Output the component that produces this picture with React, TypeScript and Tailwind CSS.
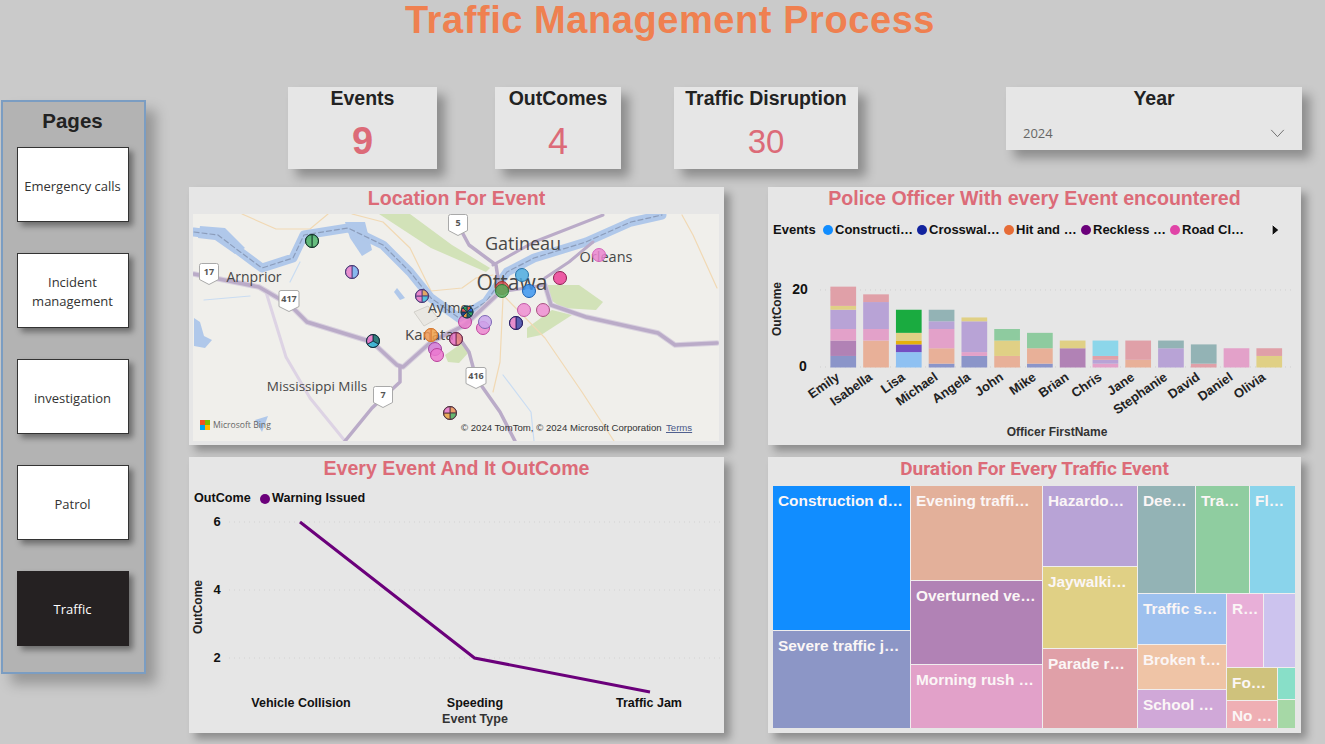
const pages = ["Emergency calls", "Incident management", "investigation", "Patrol"];

type PinData = { x: number; y: number; r?: number; colors: string[]; stroke: string };

// map pins, in page coordinates
const pins: PinData[] = [
  { x: 312, y: 241, colors: ["#4fb56c", "#45ad63"], stroke: "#14352a" },
  { x: 352, y: 272, colors: ["#76aef0", "#e67fcb"], stroke: "#4a3a78" },
  { x: 422, y: 296, colors: ["#eba24f", "#3bbad8", "#e673c6", "#e673c6"], stroke: "#4a3a78" },
  { x: 465, y: 322, colors: ["#ea7fcd"], stroke: "#b8409a" },
  { x: 467, y: 312, r: 6, colors: ["#e0433a", "#1f5fd0", "#1d9a4d", "#0d5f56", "#f0a030", "#0f2a7a", "#e0433a", "#1d9a4d"], stroke: "#1d3a4a" },
  { x: 483, y: 328, colors: ["#ec86d0"], stroke: "#c0459f" },
  { x: 485, y: 322, colors: ["#c9a6ec"], stroke: "#7d67b5" },
  { x: 516, y: 323, colors: ["#3f46a8", "#e47cc8"], stroke: "#2a1f66" },
  { x: 524, y: 310, colors: ["#ee8ed2"], stroke: "#c25aa8" },
  { x: 543, y: 310, colors: ["#ee8ed2"], stroke: "#a8507f" },
  { x: 502, y: 288, colors: ["#d85050"], stroke: "#a03030" },
  { x: 502, y: 291, colors: ["#57ad5d"], stroke: "#2e7a3c" },
  { x: 522, y: 275, colors: ["#4dace0"], stroke: "#2573a8" },
  { x: 529, y: 291, colors: ["#3d96f0"], stroke: "#1a5fb0" },
  { x: 560, y: 278, colors: ["#ec3f98"], stroke: "#8c1f50" },
  { x: 599, y: 255, colors: ["#ea86d0"], stroke: "#d565ba" },
  { x: 431, y: 335, colors: ["#f0a14c", "#ee9a58"], stroke: "#d87a30" },
  { x: 456, y: 339, colors: ["#e57a78", "#e56fc0"], stroke: "#6b2a50" },
  { x: 373, y: 341, colors: ["#0f6a68", "#2cb4d4", "#e673c6"], stroke: "#12303f" },
  { x: 435, y: 349, colors: ["#d278d6"], stroke: "#a040a0" },
  { x: 437, y: 355, colors: ["#ec78cf"], stroke: "#b83f9a" },
  { x: 450, y: 413, colors: ["#ec8f55", "#4cad5a", "#e8a040", "#e673c6"], stroke: "#503040" },
];

function Pin({ pin }: { pin: PinData }) {
  const r = pin.r ?? 6.5;
  if (pin.colors.length === 1) {
    return <circle cx={pin.x} cy={pin.y} r={r} fill={pin.colors[0]} fillOpacity={0.85} stroke={pin.stroke} strokeWidth={1} />;
  }
  const step = (Math.PI * 2) / pin.colors.length;
  return (
    <g>
      {pin.colors.map((c, i) => {
        const a = i * step - Math.PI / 2;
        const b = a + step;
        const x1 = pin.x + r * Math.cos(a);
        const y1 = pin.y + r * Math.sin(a);
        const x2 = pin.x + r * Math.cos(b);
        const y2 = pin.y + r * Math.sin(b);
        return (
          <path
            key={i}
            d={`M${pin.x} ${pin.y}L${x1} ${y1}A${r} ${r} 0 0 1 ${x2} ${y2}Z`}
            fill={c}
            fillOpacity={0.85}
            stroke={pin.stroke}
            strokeWidth={0.8}
          />
        );
      })}
      <circle cx={pin.x} cy={pin.y} r={r} fill="none" stroke={pin.stroke} strokeWidth={1} />
    </g>
  );
}

function Shield({ x, y, label, w }: { x: number; y: number; label: string; w: number }) {
  const h = w > 18 ? 21 : 20;
  const l = x - w / 2;
  const t = y - h / 2;
  return (
    <g>
      <path
        d={`M${l} ${t + 2}Q${l} ${t} ${l + 2} ${t}H${l + w - 2}Q${l + w} ${t} ${l + w} ${t + 2}V${t + h - 5}L${x} ${t + h}L${l} ${t + h - 5}Z`}
        fill="#fff"
        stroke="#a9a9a9"
        strokeWidth={1}
      />
      <text x={x} y={y - 1} textAnchor="middle" dominantBaseline="middle" fontSize={9} fontWeight={700} fill="#555" fontFamily="'Open Sans', sans-serif">
        {label}
      </text>
    </g>
  );
}

function MapLabel({ x, y, size, children, anchor = "middle" }: { x: number; y: number; size: number; children: string; anchor?: "middle" | "start" }) {
  return (
    <text x={x} y={y} textAnchor={anchor} dominantBaseline="middle" fontSize={size} fill="#474747" fontFamily="'Open Sans', sans-serif">
      {children}
    </text>
  );
}

function EventMap() {
  const river = "M194 232L218 235L235 248L262 268L293 258L304 235L348 228L383 245L410 272L431 298L459 318L486 302L507 272L534 258L586 242L631 222L662 215";
  const road417 = "M194 274L259 287L290 305L307 322L372 342L397 365L403 367L431 342L465 325L500 292";
  const road417e = "M545 285L551 305L586 317L658 333L675 345L717 343";
  const road416 = "M455 332L469 352L476 378L500 412L515 441";
  const road7 = "M400 367L400 382L372 408L345 441";
  const road5 = "M462 232L469 245L496 265L500 292";
  const roadN = "M493 265L534 242L603 215";
  const roadN2 = "M545 278L569 262L593 242";
  return (
    <svg viewBox="193 214 526 227" className="block w-[526px] h-[227px]">
      <rect x={193} y={214} width={526} height={227} fill="#f0efeb" />
      <g fill="#d2e2b8">
        <path d="M379 214L410 214L452 245L490 268L486 272L431 248Z" />
        <path d="M548 285L579 285L603 302L596 310L562 308L548 298Z" />
        <path d="M527 328L552 310L572 315L541 335L527 338Z" />
        <path d="M445 355L462 343L469 352L459 363L448 362Z" />
      </g>
      <g fill="#b0c8ea">
        <path d="M194 318L200 322L204 336L212 340L205 348L194 346Z" />
        <path d="M397 288L405 298L400 300L394 292Z" />
        <path d="M255 420L268 416L262 432Z" />
        <path d="M200 226L225 228L245 248L235 254L215 240L198 238Z" />
        <path d="M345 222L365 222L372 250L362 256L350 238Z" />
      </g>
      <g fill="none" strokeLinecap="round" strokeLinejoin="round">
        <path d="M242 214L276 229L310 229L328 214M352 214L383 222L410 248L431 291L462 288L476 278L493 275M682 215L693 235L717 288M503 295L545 338L582 392L614 441M503 298L500 362L493 392" stroke="#f1d9b4" strokeWidth={1.2} />
        <path d="M503 375L531 412L534 441M300 262L290 282M204 300L250 296" stroke="#c9dcf2" strokeWidth={1.2} />
        <path d={river} stroke="#b0c8ea" strokeWidth={9} />
        <path d={river} stroke="#8b9cba" strokeWidth={1.2} strokeDasharray="5 3" />
        <path d="M266 292L286 357L310 398L345 441" stroke="#ddd3e4" strokeWidth={3} />
        <path d={road417} stroke="#d8d0de" strokeWidth={5.5} />
        <path d={road417} stroke="#baabc8" strokeWidth={3.5} />
        <path d={road417e} stroke="#d8d0de" strokeWidth={5.5} />
        <path d={road417e} stroke="#baabc8" strokeWidth={3.5} />
        <path d={road416} stroke="#baabc8" strokeWidth={3.5} />
        <path d={road7} stroke="#baabc8" strokeWidth={3.5} />
        <path d={road5} stroke="#baabc8" strokeWidth={3.5} />
        <path d={roadN} stroke="#baabc8" strokeWidth={3} />
        <path d={roadN2} stroke="#baabc8" strokeWidth={3} />
        <path d="M500 292L545 285" stroke="#baabc8" strokeWidth={3} />
      </g>
      <path d="M414 312L428 306L438 318L424 326Z" fill="#e9e7e2" stroke="#d2d0ca" />
      <Shield x={458} y={225} label="5" w={19} />
      <Shield x={209} y={274} label="17" w={19} />
      <Shield x={289} y={301} label="417" w={20} />
      <Shield x={476} y={378} label="416" w={20} />
      <Shield x={383} y={397} label="7" w={19} />
      <MapLabel x={523} y={245} size={18}>Gatineau</MapLabel>
      <MapLabel x={512} y={284} size={21}>Ottawa</MapLabel>
      <MapLabel x={606} y={258} size={14.5}>Orleans</MapLabel>
      <MapLabel x={254} y={278} size={14}>Arnprior</MapLabel>
      <MapLabel x={428} y={309} size={14} anchor="start">Aylmer</MapLabel>
      <MapLabel x={405} y={336} size={15} anchor="start">Kanata</MapLabel>
      <MapLabel x={317} y={387} size={13.5}>Mississippi Mills</MapLabel>
      {pins.map((p, i) => (
        <Pin key={i} pin={p} />
      ))}
      <rect x={200} y={420} width={5} height={5} fill="#f25022" />
      <rect x={205} y={420} width={5} height={5} fill="#7fba00" />
      <rect x={200} y={425} width={5} height={5} fill="#00a4ef" />
      <rect x={205} y={425} width={5} height={5} fill="#ffb900" />
      <text x={213} y={428} fontSize={8.6} fill="#666" fontFamily="'Open Sans', sans-serif">Microsoft Bing</text>
      <text x={461} y={431} fontSize={9.6} fill="#333" fontFamily="'Liberation Sans', sans-serif">© 2024 TomTom, © 2024 Microsoft Corporation</text>
      <text x={666} y={431} fontSize={9.6} fill="#4a5a8a" textDecoration="underline" fontFamily="'Liberation Sans', sans-serif">Terms</text>
    </svg>
  );
}

const c = {
  navy: "#8b95c9",
  purple: "#b182b5",
  pink: "#e3a1c9",
  lav: "#b8a3d6",
  yel: "#e0d085",
  rose: "#e0a0a8",
  sal: "#e8b098",
  teal: "#93b3b5",
  green: "#8ecb9f",
  sky: "#8cd6ea",
};

const officers: { name: string; parts: [string, number][] }[] = [
  { name: "Emily", parts: [[c.navy, 3], [c.purple, 4], [c.pink, 3], [c.lav, 5], [c.yel, 1], [c.rose, 5]] },
  { name: "Isabella", parts: [[c.sal, 7], [c.pink, 3], [c.lav, 7], [c.rose, 2]] },
  { name: "Lisa", parts: [["#8fc1f2", 4], ["#744ec2", 2], ["#e6b00c", 1], [c.yel, 2], ["#1aab40", 6]] },
  { name: "Michael", parts: [[c.navy, 1], [c.sal, 4], [c.pink, 5], [c.lav, 2], [c.teal, 3]] },
  { name: "Angela", parts: [[c.navy, 3], [c.pink, 1], [c.lav, 8], [c.yel, 1]] },
  { name: "John", parts: [[c.sal, 3], [c.yel, 4], [c.green, 3]] },
  { name: "Mike", parts: [[c.navy, 1], [c.sal, 4], [c.green, 4]] },
  { name: "Brian", parts: [[c.purple, 5], [c.yel, 2]] },
  { name: "Chris", parts: [[c.pink, 1], [c.lav, 1], [c.rose, 1], [c.sky, 4]] },
  { name: "Jane", parts: [[c.sal, 2], [c.rose, 5]] },
  { name: "Stephanie", parts: [[c.lav, 5], [c.teal, 2]] },
  { name: "David", parts: [[c.rose, 1], [c.teal, 5]] },
  { name: "Daniel", parts: [[c.pink, 5]] },
  { name: "Olivia", parts: [[c.yel, 3], [c.rose, 2]] },
];

function OfficerChart() {
  const unit = 3.85;
  return (
    <svg viewBox="768 240 533 205" className="block w-[533px] h-[205px]" fontFamily="'Liberation Sans', sans-serif">
      <line x1={820} x2={1295} y1={290} y2={290} stroke="#cfcfcf" strokeDasharray="1 4" />
      <line x1={820} x2={1295} y1={367} y2={367} stroke="#cfcfcf" strokeDasharray="1 4" />
      <text x={800} y={290} textAnchor="middle" dominantBaseline="middle" fontSize={14} fontWeight={700} fill="#111">20</text>
      <text x={803} y={367} textAnchor="middle" dominantBaseline="middle" fontSize={14} fontWeight={700} fill="#111">0</text>
      <text transform="translate(778 309) rotate(-90)" textAnchor="middle" dominantBaseline="middle" fontSize={12} fontWeight={700} fill="#222">OutCome</text>
      {officers.map((o, i) => {
        const x = 830.4 + i * 32.77;
        let y = 367.5;
        return (
          <g key={o.name}>
            {o.parts.map(([color, n], j) => {
              y -= n * unit;
              return <rect key={j} x={x} y={y} width={25.7} height={n * unit} fill={color} />;
            })}
            <text
              transform={`translate(${x + 10} 379) rotate(-35)`}
              textAnchor="end"
              fontSize={13}
              fontWeight={700}
              fill="#222"
            >
              {o.name}
            </text>
          </g>
        );
      })}
      <text x={1057} y={433} textAnchor="middle" dominantBaseline="middle" fontSize={12} fontWeight={700} fill="#333">Officer FirstName</text>
    </svg>
  );
}

function OutcomeChart() {
  return (
    <svg viewBox="189 508 535 225" className="block w-[535px] h-[225px]" fontFamily="'Liberation Sans', sans-serif">
      {[522, 590, 658].map((y, i) => (
        <g key={y}>
          <line x1={229} x2={720} y1={y} y2={y} stroke="#d2d2d2" strokeDasharray="1 4" />
          <text x={217} y={y + 1} textAnchor="middle" dominantBaseline="middle" fontSize={13} fontWeight={700} fill="#111">
            {["6", "4", "2"][i]}
          </text>
        </g>
      ))}
      <text transform="translate(199 607) rotate(-90)" textAnchor="middle" dominantBaseline="middle" fontSize={12} fontWeight={700} fill="#222">OutCome</text>
      <polyline points="300,522 474.5,658 650,692" fill="none" stroke="#6b007b" strokeWidth={3} />
      <text x={301} y={704} textAnchor="middle" dominantBaseline="middle" fontSize={12.5} fontWeight={700} fill="#111">Vehicle Collision</text>
      <text x={475} y={704} textAnchor="middle" dominantBaseline="middle" fontSize={12.5} fontWeight={700} fill="#111">Speeding</text>
      <text x={649} y={704} textAnchor="middle" dominantBaseline="middle" fontSize={12.5} fontWeight={700} fill="#111">Traffic Jam</text>
      <text x={475} y={720} textAnchor="middle" dominantBaseline="middle" fontSize={12.5} fontWeight={700} fill="#333">Event Type</text>
    </svg>
  );
}

function Tile({ className, label }: { className: string; label?: string }) {
  return (
    <div className={`${className} overflow-hidden whitespace-nowrap pl-[5px] pt-[6px] text-[15.4px] leading-[18px] font-bold text-[#fbf6f6]`}>
      {label}
    </div>
  );
}

function Treemap() {
  return (
    <div className="flex gap-px ml-[5px] w-[522px] h-[242px] bg-[#f0eeee]">
      <div className="flex flex-col gap-px w-[137px]">
        <Tile className="h-[144px] bg-[#118dff]" label="Construction d…" />
        <Tile className="h-[97px] bg-[#8c96c6]" label="Severe traffic j…" />
      </div>
      <div className="flex flex-col gap-px w-[131px]">
        <Tile className="h-[94px] bg-[#e3b09a]" label="Evening traffi…" />
        <Tile className="h-[83px] bg-[#b182b5]" label="Overturned ve…" />
        <Tile className="h-[63px] bg-[#e2a1c9]" label="Morning rush …" />
      </div>
      <div className="flex flex-col gap-px w-[94px]">
        <Tile className="h-[80px] bg-[#b8a3d6]" label="Hazardo…" />
        <Tile className="h-[81px] bg-[#e0d085]" label="Jaywalki…" />
        <Tile className="h-[79px] bg-[#e0a0a8]" label="Parade r…" />
      </div>
      <div className="flex flex-col gap-px w-[157px]">
        <div className="flex gap-px h-[107px]">
          <Tile className="w-[57px] bg-[#93b3b5]" label="Dee…" />
          <Tile className="w-[53px] bg-[#8fcda0]" label="Tra…" />
          <Tile className="w-[45px] bg-[#8ad4eb]" label="Fl…" />
        </div>
        <div className="flex gap-px h-[134px]">
          <div className="flex flex-col gap-px w-[88px]">
            <Tile className="h-[50px] bg-[#9dc0ee]" label="Traffic s…" />
            <Tile className="h-[44px] bg-[#efc4a6]" label="Broken t…" />
            <Tile className="h-[38px] bg-[#d0a8d8]" label="School …" />
          </div>
          <div className="flex flex-col gap-px w-[68px]">
            <div className="flex gap-px h-[73px]">
              <Tile className="w-[36px] bg-[#e8afd8]" label="R…" />
              <Tile className="w-[31px] bg-[#ccc3ee]" />
            </div>
            <div className="flex gap-px h-[60px]">
              <div className="flex flex-col gap-px w-[50px]">
                <Tile className="h-[32px] bg-[#cfc27c]" label="Fo…" />
                <Tile className="h-[27px] bg-[#efafb4]" label="No …" />
              </div>
              <div className="flex flex-col gap-px w-[17px]">
                <div className="h-[31px] bg-[#88dfc8]" />
                <div className="h-[28px] bg-[#a6d8a6]" />
              </div>
            </div>
          </div>
        </div>
      </div>
    </div>
  );
}

const legend = [
  { label: "Constructi…", color: "bg-[#118dff]", w: "w-[94px]" },
  { label: "Crosswal…", color: "bg-[#12239e]", w: "w-[87px]" },
  { label: "Hit and …", color: "bg-[#e66c37]", w: "w-[77px]" },
  { label: "Reckless …", color: "bg-[#6b007b]", w: "w-[89px]" },
  { label: "Road Cl…", color: "bg-[#e044a7]", w: "w-[101px]" },
];

function KpiCard({ label, value, className, valueClass }: { label: string; value: string; className: string; valueClass: string }) {
  return (
    <div className={`${className} h-[82px] bg-[#e6e6e6] shadow-[8px_8px_10px_rgba(0,0,0,0.3)] flex flex-col items-center`}>
      <div className="text-[19.5px] leading-[23px] font-bold text-[#222]">{label}</div>
      <div className={`${valueClass} text-[#dc6b78]`}>{value}</div>
    </div>
  );
}

const panelCls = "bg-[#e6e6e6] shadow-[6px_6px_8px_rgba(0,0,0,0.3)] overflow-hidden";

export default function App() {
  return (
    <div className="w-[1325px] h-[744px] overflow-hidden bg-[#cacaca] font-['Liberation_Sans',sans-serif]">
      <h1 className="h-[40px] pl-[15px] text-center text-[38px] tracking-[0.57px] leading-[40px] font-bold text-[#ef8050]">
        Traffic Management Process
      </h1>

      <div className="flex">
        <aside className="ml-px mt-[60px] w-[145px] h-[574px] pr-[2px] bg-[#b3b3b3] border-2 border-[#7b9dc2] shadow-[10px_10px_12px_rgba(0,0,0,0.25)] flex flex-col items-center">
          <div className="mt-[7px] mb-[14px] text-[20.5px] leading-[24px] font-bold text-[#222]">Pages</div>
          <div className="flex flex-col gap-[31px]">
            {pages.map((p) => (
              <button
                key={p}
                className="w-[112px] h-[75px] px-[6px] pt-[3px] bg-white border border-[#333] shadow-[4px_4px_6px_rgba(0,0,0,0.4)] text-[13px] leading-[19px] text-[#333] font-['Open_Sans',sans-serif]"
              >
                {p}
              </button>
            ))}
            <button className="w-[112px] h-[75px] pt-[3px] bg-[#252122] shadow-[4px_4px_6px_rgba(0,0,0,0.4)] text-[13px] text-white font-['Open_Sans',sans-serif]">
              Traffic
            </button>
          </div>
        </aside>

        <main className="ml-[43px] mt-[47px]">
          <div className="flex items-start pl-[99px]">
            <KpiCard label="Events" value="9" className="w-[149px]" valueClass="mt-[9px] text-[38px] leading-[44px] font-bold" />
            <KpiCard label="OutComes" value="4" className="ml-[58px] w-[126px]" valueClass="mt-[10px] text-[36px] leading-[44px]" />
            <KpiCard label="Traffic Disruption" value="30" className="ml-[53px] w-[184px]" valueClass="mt-[10px] text-[33px] leading-[44px]" />
            <div className="ml-[148px] w-[296px] h-[63px] bg-[#e6e6e6] shadow-[8px_8px_10px_rgba(0,0,0,0.3)]">
              <div className="text-center text-[19.5px] leading-[23px] font-bold text-[#222]">Year</div>
              <div className="mt-[15px] mx-[17px] flex items-center justify-between">
                <span className="text-[13px] leading-[16px] text-[#666] font-['Open_Sans',sans-serif]">2024</span>
                <svg viewBox="0 0 16 10" className="w-[15px] h-[9px]">
                  <path d="M1 1L8 8.5L15 1" fill="none" stroke="#666" strokeWidth={1} />
                </svg>
              </div>
            </div>
          </div>

          <div className="mt-[18px] grid grid-cols-[535px_533px] grid-rows-[258px_276px] gap-x-[44px] gap-y-[12px]">
            <section className={panelCls}>
              <h2 className="h-[27px] text-center text-[19.6px] leading-[23px] font-bold text-[#dc6b78]">Location For Event</h2>
              <div className="ml-[4px]">
                <EventMap />
              </div>
            </section>

            <section className={panelCls}>
              <h2 className="h-[27px] text-center text-[19.6px] leading-[23px] font-bold text-[#dc6b78]">
                Police Officer With every Event encountered
              </h2>
              <div className="mt-[5px] h-[21px] flex items-center pl-[5px] text-[13px] font-bold text-[#111] whitespace-nowrap">
                <span className="w-[50px]">Events</span>
                {legend.map((l) => (
                  <span key={l.label} className={`${l.w} flex items-center gap-[2px]`}>
                    <span className={`${l.color} w-[10px] h-[10px] rounded-full shrink-0`} />
                    {l.label}
                  </span>
                ))}
                <svg viewBox="0 0 8 12" className="w-[9px] h-[14px]">
                  <path d="M1 1L7 6L1 11Z" fill="#111" stroke="#fff" strokeWidth={0.8} />
                </svg>
              </div>
              <OfficerChart />
            </section>

            <section className={panelCls}>
              <h2 className="h-[27px] text-center text-[19.6px] leading-[23px] font-bold text-[#dc6b78]">Every Event And It OutCome</h2>
              <div className="mt-[5px] h-[19px] flex items-center pl-[5px] text-[12.6px] font-bold text-[#111]">
                <span className="w-[66px]">OutCome</span>
                <span className="w-[10px] h-[10px] rounded-full bg-[#6b007b] mr-[2px]" />
                Warning Issued
              </div>
              <OutcomeChart />
            </section>

            <section className={panelCls}>
              <h2 className="h-[29px] text-center text-[19px] leading-[24px] font-bold text-[#dc6b78] font-['Roboto',sans-serif]">
                Duration For Every Traffic Event
              </h2>
              <Treemap />
            </section>
          </div>
        </main>
      </div>
    </div>
  );
}
